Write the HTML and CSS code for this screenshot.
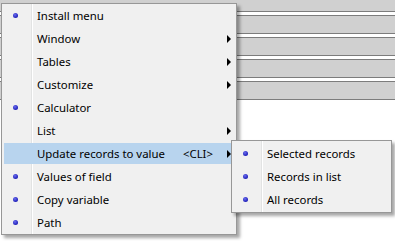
FILE: index.html
```html
<!DOCTYPE html>
<html lang="en">
<head>
    <meta charset="UTF-8">
    <title>Context Menu</title>
    <link rel="stylesheet" href="styles.css">
</head>
<body>
    <!-- grid rows behind the menu -->
    <div class="grid">
        <div class="bar bar-cut"></div>
        <div class="bar"></div>
        <div class="bar"></div>
        <div class="bar"></div>
        <div class="bar"></div>
    </div>

    <div class="menu main-menu">
        <div class="item"><span class="mark"><span class="dot"></span></span><span class="label">Install menu</span></div>
        <div class="item"><span class="mark"></span><span class="label">Window</span><span class="arrow"></span></div>
        <div class="item"><span class="mark"></span><span class="label">Tables</span><span class="arrow"></span></div>
        <div class="item"><span class="mark"></span><span class="label">Customize</span><span class="arrow"></span></div>
        <div class="item"><span class="mark"><span class="dot"></span></span><span class="label">Calculator</span></div>
        <div class="item"><span class="mark"></span><span class="label">List</span><span class="arrow"></span></div>
        <div class="item active"><span class="mark"></span><span class="label">Update records to value</span><span class="shortcut">&lt;CLI&gt;</span><span class="arrow"></span></div>
        <div class="item"><span class="mark"><span class="dot"></span></span><span class="label">Values of field</span></div>
        <div class="item"><span class="mark"><span class="dot"></span></span><span class="label">Copy variable</span></div>
        <div class="item"><span class="mark"><span class="dot"></span></span><span class="label">Path</span></div>
    </div>

    <div class="menu sub-menu">
        <div class="item"><span class="mark"><span class="dot"></span></span><span class="label">Selected records</span></div>
        <div class="item"><span class="mark"><span class="dot"></span></span><span class="label">Records in list</span></div>
        <div class="item"><span class="mark"><span class="dot"></span></span><span class="label">All records</span></div>
    </div>
</body>
</html>
```

FILE: styles.css
```css
/* Windows style popup menu */
body {
    margin: 0;
    width: 395px;
    height: 241px;
    overflow: hidden;
    position: relative;
    background-color: #fff;
    font-family: "Noto Sans", Arial, sans-serif;
    font-size: 11.4px;
    color: #000;
}

.bar {
    height: 17px;
    background-color: #d0d0d0;
    border-top: 1px solid #7c7c7c;
    border-bottom: 1px solid #7c7c7c;
    margin-bottom: 3px;
}

.bar-cut {
    height: 11px;
    border-top: none;
}

.menu {
    position: absolute;
    display: flex;
    flex-direction: column;
    border: 1px solid #979797;
    background: linear-gradient(to right, #f0f0f0 29px, #e2e3e3 29px, #e2e3e3 30px, #fff 30px, #fff 31px, #f0f0f0 31px);
    box-shadow: 3px 3px 3px rgba(0, 0, 0, 0.35);
}

.main-menu {
    left: 1px;
    top: 3px;
    width: 234px;
}

.sub-menu {
    left: 231px;
    top: 140px;
    width: 159px;
    padding: 1px 0;
}

.item {
    height: 21px;
    margin: 1px 2px;
    display: flex;
    align-items: center;
    white-space: nowrap;
}

.item.active {
    background-color: #b8d4ee;
}

.mark {
    width: 33px;
    flex: none;
    display: flex;
    align-items: center;
}

.dot {
    width: 5px;
    height: 5px;
    margin-left: 9px;
    border-radius: 50%;
    background: radial-gradient(circle at 40% 35%, #6a6cf0, #2020b8 70%);
}

.label {
    flex: 1;
}

.shortcut {
    margin-right: 14px;
}

.arrow {
    width: 0;
    height: 0;
    margin-right: 3px;
    border-left: 4px solid #000;
    border-top: 4px solid transparent;
    border-bottom: 4px solid transparent;
}
```
